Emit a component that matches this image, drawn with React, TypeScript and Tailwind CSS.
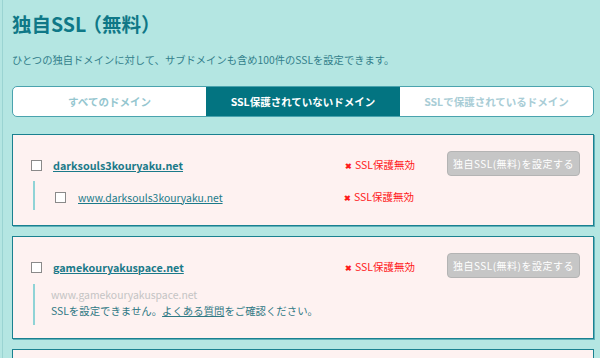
import React from "react";

const font = { fontFamily: '"Noto Sans CJK JP", "Noto Sans", sans-serif' };

function Box() {
  return <span className="inline-block w-[11px] h-[11px] border border-[#8a8a8a] bg-white shrink-0" />;
}

function Status() {
  return (
    <span className="flex items-center gap-[3px] text-[10.5px] text-[#ff1a1a] leading-none">
      <span className="text-[8px] font-bold">✖</span>
      <span>SSL保護無効</span>
    </span>
  );
}

function SetButton() {
  return (
    <div className="w-[133px] h-[25px] rounded-[4px] bg-[#c6c6c6] border border-[#b4b4b4] flex items-center justify-center text-[10px] text-white tracking-[0.5px]">
      独自SSL(無料)を設定する
    </div>
  );
}

export default function App() {
  return (
    <div style={font} className="w-[600px] h-[358px] overflow-hidden bg-[#b4e6e2] pl-[2px]">
      <div className="h-full border-l border-[#9ad4d2] pl-[9px] pr-[6px]">
        <h1 className="pt-[10px] h-[37px] text-[19.5px] leading-[27px] font-bold text-[#0f7887]">
          独自SSL<span className="ml-[6px] [font-feature-settings:'halt']">（無料）</span>
        </h1>
        <p className="mt-[15px] text-[10.3px] leading-[16px] text-[#337f8b]">
          ひとつの独自ドメインに対して、サブドメインも含め100件のSSLを設定できます。
        </p>
        <div className="mt-[18px] h-[31px] flex rounded-[5px] border border-[#4aa3ae] bg-white overflow-hidden text-[10.5px] font-bold">
          <div className="w-[193px] flex items-center justify-center text-[#95c6cf]">すべてのドメイン</div>
          <div className="w-[194px] flex items-center justify-center bg-[#037481] text-white">SSL保護されていないドメイン</div>
          <div className="flex-1 flex items-center justify-center text-[#a9cdd6]">SSLで保護されているドメイン</div>
        </div>

        <div className="mt-[17px] h-[92px] bg-[#fef2f1] border border-[#1a8190] shadow-[1px_1px_0_#5fb1ba] pt-[16px] pl-[18px] pr-[13px]">
          <div className="flex items-start h-[25px]">
            <div className="flex items-center h-[25px] pt-[4px]">
              <Box />
              <a className="ml-[11px] w-[292px] text-[10.8px] font-bold text-[#1b7a89] underline">darksouls3kouryaku.net</a>
              <Status />
            </div>
            <div className="ml-auto"><SetButton /></div>
          </div>
          <div className="mt-[5px] ml-[2px] h-[29px] border-l-2 border-[#8fd3d6] flex items-center pl-[20px] pt-[4px]">
            <Box />
            <a className="ml-[12px] w-[266px] text-[10.4px] text-[#1b7a89] underline">www.darksouls3kouryaku.net</a>
            <Status />
          </div>
        </div>

        <div className="mt-[10px] h-[103px] bg-[#fef2f1] border border-[#1a8190] shadow-[1px_1px_0_#5fb1ba] pt-[16px] pl-[18px] pr-[13px]">
          <div className="flex items-start h-[25px]">
            <div className="flex items-center h-[25px] pt-[4px]">
              <Box />
              <a className="ml-[11px] w-[292px] text-[10.8px] font-bold text-[#1b7a89] underline">gamekouryakuspace.net</a>
              <Status />
            </div>
            <div className="ml-auto"><SetButton /></div>
          </div>
          <div className="mt-[6px] ml-[2px] h-[41px] border-l-2 border-[#8fd3d6] pl-[16px] pt-[3px] text-[10.4px] leading-[16px]">
            <div className="text-[#c4c4c4]">www.gamekouryakuspace.net</div>
            <div className="text-[#2f7884]">
              SSLを設定できません。<a className="underline">よくある質問</a>をご確認ください。
            </div>
          </div>
        </div>

        <div className="mt-[10px] h-[40px] bg-[#fef2f1] border border-[#1a8190]" />
      </div>
    </div>
  );
}
